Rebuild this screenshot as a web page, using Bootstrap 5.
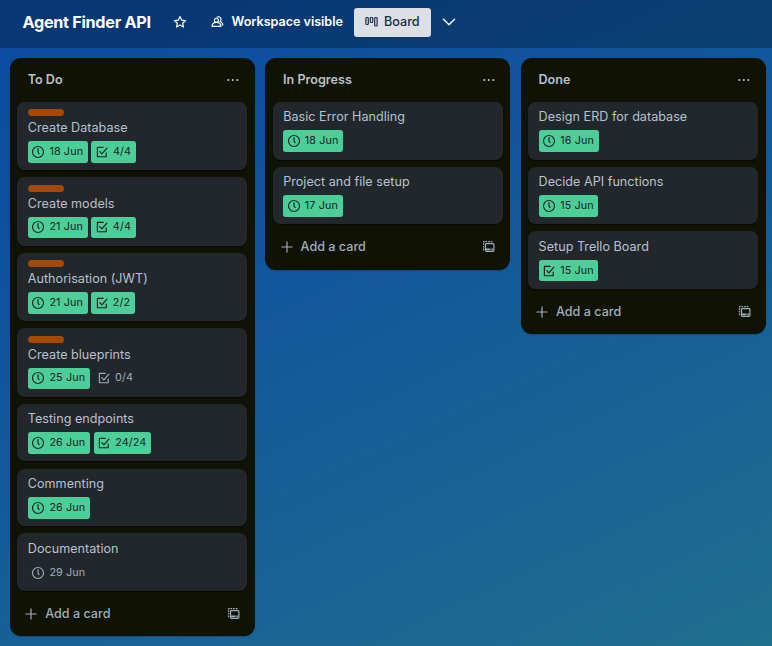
<!DOCTYPE html>
<html lang="en">
<head>
<meta charset="utf-8">
<meta name="viewport" content="width=device-width, initial-scale=1">
<title>Agent Finder API</title>
<link href="https://cdn.jsdelivr.net/npm/bootstrap@5.3.0/dist/css/bootstrap.min.css" rel="stylesheet">
<style>
body{font-family:Inter,"Liberation Sans",sans-serif;font-size:12.6px;line-height:18px;color:#b6c2cf;height:646px;overflow:hidden;background:linear-gradient(155deg,#094ba0 0%,#12589b 45%,#1f6f8e 100%)}
svg{display:block;flex:none}
.topbar{height:48px;background:rgba(0,0,0,.27);color:#fff;padding:0 0 4px 22.5px}
.board-name{font-size:16.2px;font-weight:700;letter-spacing:-.28px;width:150px}
.vis{font-size:12.6px;font-weight:600;letter-spacing:-.03px;width:122px}
.view-btn{width:77px;height:29px;border-radius:3px;background:#dcdfe4;color:#172b4d;font-weight:500;font-size:12.6px;padding:0 0 0 11.5px;gap:6px;border:0}
.lists{padding:10px 0 0 9.8px;gap:10.4px}
.list-col{width:245px;border-radius:11px;background:#101204;padding:0 7.4px;box-shadow:0 1px 1px rgba(9,30,66,.3)}
.list-head{height:44px;padding:0 7px 0 10.5px;font-weight:600}
.task-card{border-radius:7.5px;background:#22272b;padding:6.4px 10.6px 0;height:57.5px;box-shadow:0 1px 1px rgba(3,4,4,.6)}
.task-card.tagged{height:68.3px}
.tag{width:36px;height:7.2px;border-radius:3.6px;background:#a54800;margin:.8px 0 2.8px}
.task-name{letter-spacing:.02px}
.chips{gap:3.6px;margin-top:4px}
.chip{height:21.6px;border-radius:2.7px;padding:0 4.6px 0 3.6px;gap:4px;font-size:10.8px;color:#9fadbc;letter-spacing:.12px}
.chip.done{background:#4bce97;color:#1d2125}
.list-foot{height:45.4px;padding:0 6.5px 0 8px;font-weight:500;color:#9fadbc}
</style>
</head>
<body>
<svg width="0" height="0" class="position-absolute" aria-hidden="true">
<defs>
<symbol id="clock" viewBox="0 0 14 14"><g fill="none" stroke="currentColor" stroke-width="1.15" stroke-linecap="round"><circle cx="7" cy="7" r="5.5"/><path d="M7 3.6V7l1.1 1.6"/></g></symbol>
<symbol id="check" viewBox="0 0 14 14"><g fill="none" stroke="currentColor" stroke-width="1.15" stroke-linecap="round" stroke-linejoin="round"><path d="M8.2 2.3H2.4v9.4h8.8V8"/><path d="M4.8 6.6l2.1 2.3 5-5.7"/></g></symbol>
<symbol id="template" viewBox="0 0 14 14"><g fill="none" stroke="currentColor" stroke-width="1.2"><path d="M1.6 10.2V1.7h9.4" stroke-dasharray="1.7 .9"/><rect x="3.5" y="3.6" width="8.4" height="7.8" rx=".8"/><path d="M3.5 9.3h5M9.4 9.3h1.6" stroke-width="1.7"/></g></symbol>
<symbol id="plus" viewBox="0 0 12 12"><path d="M6 .9v10.2M.9 6h10.2" stroke="currentColor" stroke-width="1.2" stroke-linecap="round"/></symbol>
<symbol id="dots" viewBox="0 0 14 4"><g fill="currentColor"><circle cx="2.3" cy="2" r="1.1"/><circle cx="6.8" cy="2" r="1.1"/><circle cx="11.3" cy="2" r="1.1"/></g></symbol>
</defs>
</svg>
<header class="topbar d-flex align-items-center">
  <div class="board-name text-nowrap">Agent Finder API</div>
  <svg width="14" height="14" viewBox="0 0 14 14"><path d="M7 1.5l1.65 3.6 3.9.45-2.9 2.65.8 3.85L7 10.1l-3.45 1.95.8-3.85-2.9-2.65 3.9-.45z" fill="none" stroke="#fff" stroke-width="1.2" stroke-linejoin="round"/></svg>
  <svg class="ms-4" width="13" height="14" viewBox="0 0 13 14"><g fill="none" stroke="#fff" stroke-width="1.1" stroke-linejoin="round"><circle cx="5.4" cy="5.3" r="2"/><path d="M1 11.4c0-2.5 1.8-4 4.4-4s4.4 1.5 4.4 4z"/><path d="M5.8 2.2c2-1.2 4.400 0 4.200 2.200 0 .9-.4 1.500-.9 2 1.500.6 2.700 1.700 2.700 3.600H10.600"/></g></svg>
  <div class="vis text-nowrap ms-2">Workspace visible</div>
  <button class="view-btn d-flex align-items-center">
    <svg width="13" height="12" viewBox="0 0 13 12"><g fill="none" stroke="#172b4d" stroke-width="1.15"><rect x=".9" y="1.5" width="2.4" height="7" rx=".7"/><rect x="5.3" y="1.500" width="2.400" height="5" rx=".7"/><rect x="9.700" y="1.500" width="2.400" height="8.500" rx=".7"/></g></svg>
    <span>Board</span>
  </button>
  <svg class="ms-2" width="20" height="14" viewBox="0 0 20 14"><path d="M4.500 4.300L10 9.700l5.500-5.400" fill="none" stroke="#fff" stroke-width="1.4" stroke-linecap="round" stroke-linejoin="round"/></svg>
</header>
<main class="lists d-flex align-items-start" id="lists"></main>
<script>
const icon = (id, w, h = w) => `<svg width="${w}" height="${h}"><use href="#${id}"/></svg>`;
const chip = ([kind, text, done = true]) => `<span class="chip d-flex align-items-center ${done ? 'done' : ''}">${icon(kind, 14)}<span>${text}</span></span>`;
const lists = [
  ['To Do', [
    ['Create Database', 1, [['clock', '18 Jun'], ['check', '4/4']]],
    ['Create models', 1, [['clock', '21 Jun'], ['check', '4/4']]],
    ['Authorisation (JWT)', 1, [['clock', '21 Jun'], ['check', '2/2']]],
    ['Create blueprints', 1, [['clock', '25 Jun'], ['check', '0/4', false]]],
    ['Testing endpoints', 0, [['clock', '26 Jun'], ['check', '24/24']]],
    ['Commenting', 0, [['clock', '26 Jun']]],
    ['Documentation', 0, [['clock', '29 Jun', false]]]]],
  ['In Progress', [
    ['Basic Error Handling', 0, [['clock', '18 Jun']]],
    ['Project and file setup', 0, [['clock', '17 Jun']]]]],
  ['Done', [
    ['Design ERD for database', 0, [['clock', '16 Jun']]],
    ['Decide API functions', 0, [['clock', '15 Jun']]],
    ['Setup Trello Board', 0, [['check', '15 Jun']]]]]
];
document.getElementById('lists').innerHTML = lists.map(([name, cards]) => `
<section class="list-col flex-shrink-0">
  <div class="list-head d-flex align-items-center justify-content-between"><span>${name}</span>${icon('dots', 14, 4)}</div>
  <div class="d-flex flex-column" style="gap:7.2px">${cards.map(([t, tagged, chips]) => `
    <article class="task-card ${tagged ? 'tagged' : ''}">${tagged ? '<div class="tag"></div>' : ''}
      <div class="task-name text-nowrap">${t}</div>
      <div class="chips d-flex">${chips.map(chip).join('')}</div>
    </article>`).join('')}</div>
  <div class="list-foot d-flex align-items-center">${icon('plus', 12)}<span class="ms-2">Add a card</span><span class="ms-auto">${icon('template', 14)}</span></div>
</section>`).join('');
</script>
<script src="https://cdn.jsdelivr.net/npm/bootstrap@5.3.0/dist/js/bootstrap.bundle.min.js"></script>
</body>
</html>
